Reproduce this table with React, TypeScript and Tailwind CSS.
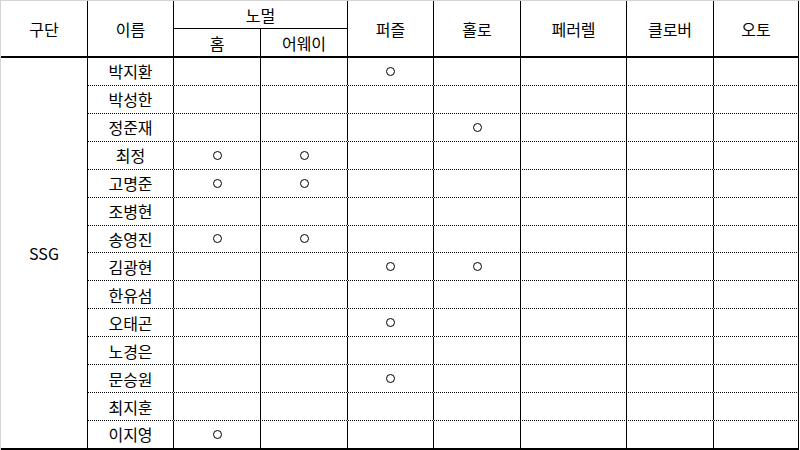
import React from "react";

const names = [
  "박지환",
  "박성한",
  "정준재",
  "최정",
  "고명준",
  "조병현",
  "송영진",
  "김광현",
  "한유섬",
  "오태곤",
  "노경은",
  "문승원",
  "최지훈",
  "이지영",
];

// 0=홈 1=어웨이 2=퍼즐 3=홀로 4=페러렐 5=클로버 6=오토
const marks: number[][] = [
  [2],
  [],
  [3],
  [0, 1],
  [0, 1],
  [],
  [0, 1],
  [2, 3],
  [],
  [2],
  [],
  [2],
  [],
  [0],
];

const dataWidths = ["w-[87px]", "w-[87px]", "w-[86px]", "w-[87px]", "w-[106px]", "w-[87px]", "w-[85px]"];

function Circle() {
  return <span className="block w-[9px] h-[9px] rounded-full border-[1.5px] border-black" />;
}

export default function App() {
  return (
    <div
      className="w-[800px] h-[450px] bg-white text-black text-[16px] overflow-hidden border-t border-l border-[#d4d4d4]"
      style={{ fontFamily: '"Noto Sans CJK KR", "Noto Sans", sans-serif' }}
    >
      {/* header */}
      <div className="flex h-[57px] w-[798px] border-b-2 border-black">
        <div className="w-[87px] shrink-0 border-r border-black flex items-center justify-center">구단</div>
        <div className="w-[86px] shrink-0 border-r border-black flex items-center justify-center">이름</div>
        <div className="w-[174px] shrink-0 border-r border-black flex flex-col">
          <div className="h-[28px] border-b border-black flex items-center justify-center">노멀</div>
          <div className="flex-1 flex">
            <div className="w-[87px] border-r border-black flex items-center justify-center">홈</div>
            <div className="flex-1 flex items-center justify-center">어웨이</div>
          </div>
        </div>
        <div className="w-[86px] shrink-0 border-r border-black flex items-center justify-center">퍼즐</div>
        <div className="w-[87px] shrink-0 border-r border-black flex items-center justify-center">홀로</div>
        <div className="w-[106px] shrink-0 border-r border-black flex items-center justify-center">페러렐</div>
        <div className="w-[87px] shrink-0 border-r border-black flex items-center justify-center">클로버</div>
        <div className="w-[85px] shrink-0 border-r border-black flex items-center justify-center">오토</div>
      </div>

      {/* body */}
      <div className="flex h-[392px] w-[798px] border-b-2 border-black">
        <div className="w-[87px] shrink-0 border-r border-black flex items-center justify-center">SSG</div>
        <div className="flex-1 flex flex-col">
          {names.map((name, r) => (
            <div
              key={name}
              className={
                "flex-1 min-h-0 flex " + (r < names.length - 1 ? "border-b border-dotted border-black" : "")
              }
            >
              <div className="w-[86px] shrink-0 border-r border-solid border-black flex items-center justify-center">
                {name}
              </div>
              {dataWidths.map((w, c) => (
                <div
                  key={c}
                  className={w + " shrink-0 border-r border-solid border-black flex items-center justify-center"}
                >
                  {marks[r].includes(c) ? <Circle /> : null}
                </div>
              ))}
            </div>
          ))}
        </div>
      </div>
    </div>
  );
}
